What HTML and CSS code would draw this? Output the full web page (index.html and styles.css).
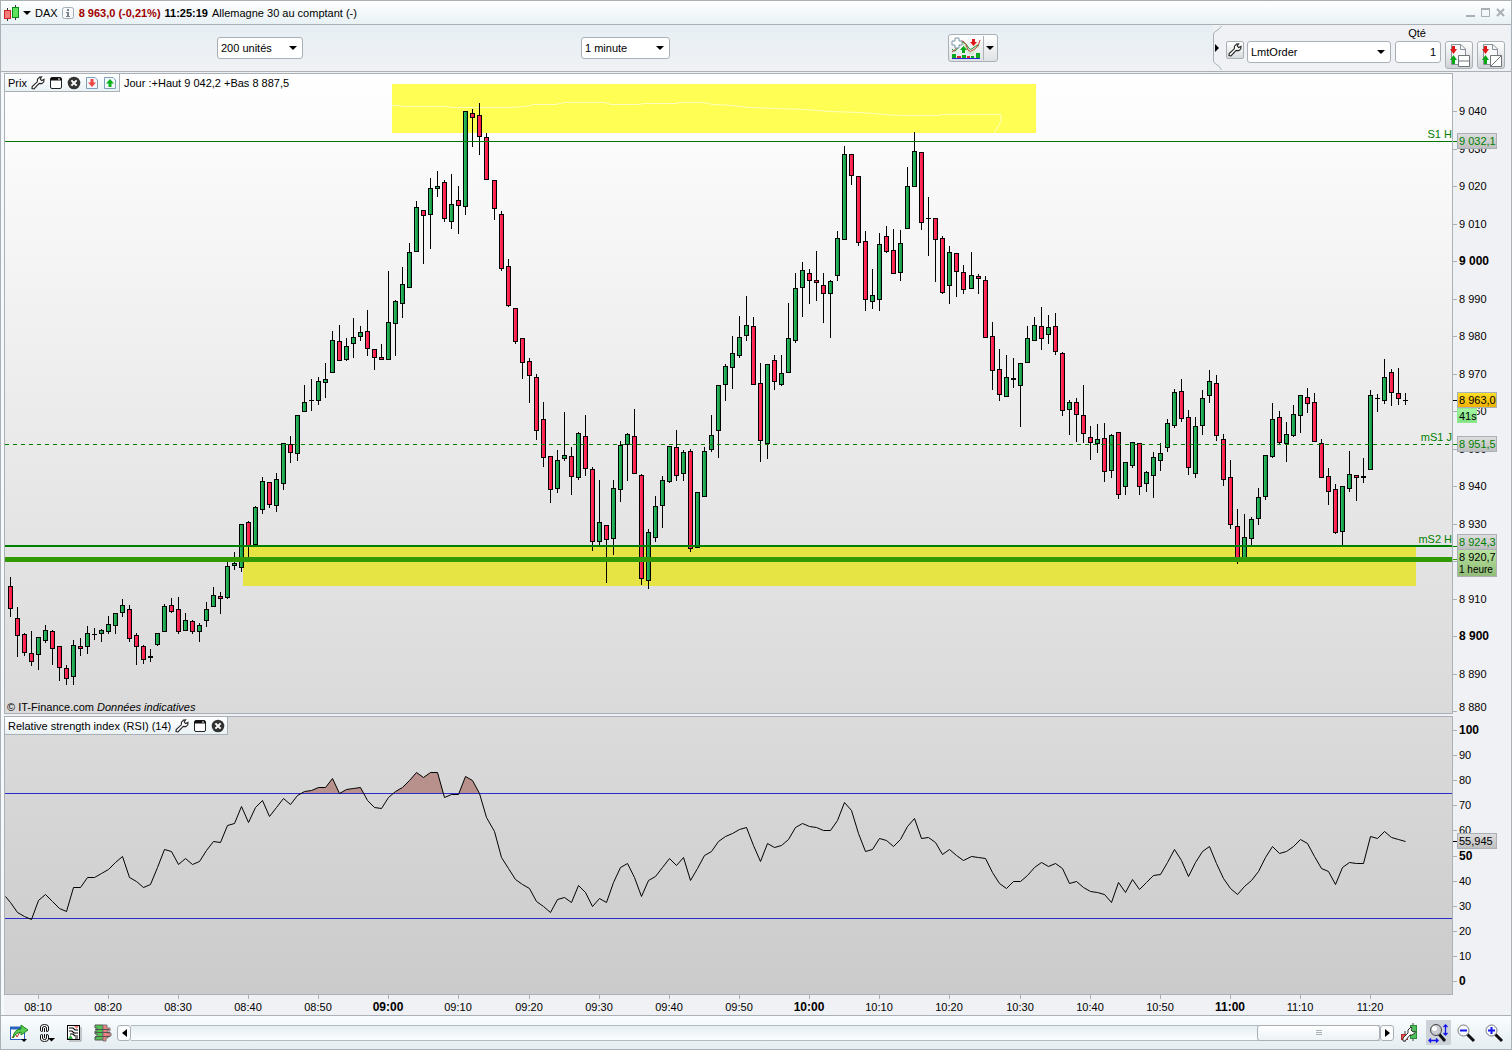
FILE: index.html
```
<!DOCTYPE html>
<html lang="fr">

<head>
    <meta charset="UTF-8">
    <meta name="viewport" content="width=device-width, initial-scale=1.0">
    <title>DAX - Allemagne 30 au comptant</title>
    <link rel="stylesheet" href="styles.css">
</head>

<body>
    <!-- Shared icons -->
    <svg class="sprite" aria-hidden="true">
        <symbol id="wrench" viewBox="0 0 14 14">
            <path d="M1 12.5 L1.2 10.6 L6.3 5.8 L6.5 3.2 L8.6 1 L10.6 0.8 L9.2 3 L10.6 4.6 L13 3.4 L12.8 5.8 L10.8 7.6 L8.2 7.4 L3 12.8 Z" fill="#fff" stroke="#222" stroke-width="1.1"/>
        </symbol>
        <symbol id="win" viewBox="0 0 14 14">
            <rect x="1.5" y="1.5" width="11" height="11" rx="1.5" fill="#fff" stroke="#222"/>
            <path d="M1.5 4.5 V3 Q1.5 1.5 3 1.5 H11 Q12.5 1.5 12.5 3 V4.5 Z" fill="#111"/>
            <path d="M9 3 H11" stroke="#fff"/>
        </symbol>
        <symbol id="close" viewBox="0 0 14 14">
            <circle cx="7" cy="7" r="6.3" fill="#333"/>
            <path d="M4.4 4.4 L9.6 9.6 M9.6 4.4 L4.4 9.6" stroke="#fff" stroke-width="2"/>
        </symbol>
        <symbol id="page-down" viewBox="0 0 14 14">
            <path d="M1.5 1.5 H10 L12.5 4 V12.5 H1.5 Z" fill="#f2f8fc" stroke="#7fa0b8"/>
            <path d="M5.5 3 H8.5 V6.5 H11 L7 11 L3 6.5 H5.5 Z" fill="#f04545"/>
        </symbol>
        <symbol id="page-up" viewBox="0 0 14 14">
            <path d="M1.5 1.5 H10 L12.5 4 V12.5 H1.5 Z" fill="#f2f8fc" stroke="#7fa0b8"/>
            <path d="M5.5 11 H8.5 V7.5 H11 L7 3 L3 7.5 H5.5 Z" fill="#0bb01a"/>
        </symbol>
        <symbol id="orders" viewBox="0 0 22 24">
            <path d="M3.5 1.5 H13 L17.5 6 V21.5 H3.5 Z" fill="#f6f8fa" stroke="#8a9096"/>
            <path d="M12.5 1.5 V6.5 H17.5" fill="none" stroke="#8a9096"/>
            <path d="M4 3 H7 V6 H9 L5.500 11 L2 6 H4 Z" fill="#e01818"/>
            <path d="M4 21 H7 V17 H9 L5.500 12 L2 17 H4 Z" fill="#08a818"/>
        </symbol>
    </svg>

    <header class="titlebar">
        <svg class="logo" width="16" height="16" viewBox="0 0 16 16">
            <path d="M3.500 3 V16 M11.500 0 V15" stroke="#333"/>
            <rect x="0.500" y="5.500" width="6" height="8" fill="#f27c7c" stroke="#c22"/>
            <rect x="8.500" y="2.500" width="6" height="10" fill="#5fe05f" stroke="#0a8a1a"/>
        </svg>
        <span class="caret"></span>
        <span class="symbol">DAX</span>
        <svg class="info" width="12" height="12" viewBox="0 0 12 12">
            <rect x="0.500" y="0.500" width="11" height="11" rx="2" fill="#f6f8fa" stroke="#a4acb2"/>
            <path d="M5 2 H7 V4 H5 Z M4 5 H7 V9 H8 V10 H4 V9 H5 V6 H4 Z" fill="#7c848a"/>
        </svg>
        <strong class="quote">8 963,0 (-0,21%)</strong>
        <strong class="clock">11:25:19</strong>
        <span>Allemagne 30 au comptant (-)</span>
        <div class="window-buttons">
            <button type="button" aria-label="Réduire"><svg width="9" height="9"><path d="M0 8 H9" stroke="#a9b0b5" stroke-width="2"/></svg></button>
            <button type="button" aria-label="Agrandir"><svg width="9" height="9"><path d="M0.500 1 V8.500 H8.500 V1" fill="none" stroke="#a9b0b5"/><path d="M0 1 H9" stroke="#a9b0b5" stroke-width="2"/></svg></button>
            <button type="button" aria-label="Fermer"><svg width="9" height="9"><path d="M1 1 L8 8 M8 1 L1 8" stroke="#a9b0b5" stroke-width="2"/></svg></button>
        </div>
    </header>

    <section class="toolbar">
        <div class="cell units">
            <span class="select"><select aria-label="Unités"><option>200 unités</option></select></span>
        </div>
        <div class="cell period">
            <span class="select"><select aria-label="Période"><option>1 minute</option></select></span>
        </div>
        <div class="cell indicators">
            <button type="button" class="split" aria-label="Indicateurs">
                <svg width="32" height="24" viewBox="0 0 32 24">
                    <path d="M2 17 Q5 16 7 11 T13 6 L20 16 Q22 18 24 13 T30 5 L29 12 Q27 10 25 15 T19 18 L12 8 Q8 8 2 17" fill="#cdeac4"/>
                    <path d="M2 13 Q5 18 8 11 Q10 7 13 6 Q16 7 18 11 Q20 15 23 12 Q25 10 29 9" fill="none" stroke="#149020"/>
                    <path d="M2 16 Q6 14 8 9 T13 5 Q16 7 18 14 Q20 17 23 14 Q28 12 30 4" fill="none" stroke="#c84040"/>
                    <path d="M5 2 H9 V5 H12 V9 H9 V12 H5 V9 H2 V5 H5 Z" fill="#fff" stroke="#7c98a8"/>
                    <path d="M22 3 H25 V6 H27 L23.500 10 L20 6 H22 Z" fill="#e01818"/>
                    <path d="M12 17 H15 V14 H17 L13.500 10 L10 14 H12 Z" fill="#08a818"/>
                    <path d="M2 18 H6 V22 H2 Z M12 19 H16 V22 H12 Z M21 20 H24 V22 H21 Z M26 17 H30 V22 H26 Z" fill="#0aa81c"/>
                    <path d="M7 20 H11 V22 H7 Z M17 20 H20 V22 H17 Z" fill="#d03030"/>
                    <path d="M2 22.500 H30" stroke="#2028d8"/>
                </svg>
                <span class="split-arrow"><span class="caret"></span></span>
            </button>
        </div>
        <form class="order">
            <svg class="bracket" width="9" height="46" viewBox="0 0 9 46">
                <path d="M8.500 1 Q7 4 1.500 7 Q0.500 8 0.500 10 V35 Q0.500 37 1.500 38 Q7 41 8.500 45" fill="none" stroke="#a9b0b6"/>
                <path d="M2 19 L6 23 L2 27 Z" fill="#000"/>
            </svg>
            <button type="button" class="tool" aria-label="Réglages"><svg width="14" height="14"><use href="#wrench"/></svg></button>
            <span class="select"><select aria-label="Type d'ordre"><option>LmtOrder</option></select></span>
            <div class="qty">
                <label for="qty">Qté</label>
                <input id="qty" type="text" value="1">
            </div>
            <button type="button" class="big" aria-label="Ordres liés">
                <svg width="22" height="24"><use href="#orders"/><path d="M10.500 12.500 H21.500 V23.500 H10.500 Z M10.500 18 H21.500" fill="#fff" stroke="#70767c"/></svg>
            </button>
            <button type="button" class="big" aria-label="Ordres obliques">
                <svg width="22" height="24"><use href="#orders"/><path d="M10.500 12.500 H21.500 V23.500 H10.500 Z" fill="#fff" stroke="#70767c"/><path d="M10.500 23.500 L21.500 12.500" stroke="#70767c"/></svg>
            </button>
        </form>
    </section>

    <main class="charts">
        <div class="plot price">
            <svg id="price"></svg>
            <div class="panel-head">
                <span>Prix</span>
                <button type="button" aria-label="Réglages"><svg width="14" height="14"><use href="#wrench"/></svg></button>
                <button type="button" aria-label="Agrandir"><svg width="14" height="14"><use href="#win"/></svg></button>
                <button type="button" aria-label="Fermer"><svg width="14" height="14"><use href="#close"/></svg></button>
                <button type="button" aria-label="Vers le bas"><svg width="14" height="14"><use href="#page-down"/></svg></button>
                <button type="button" aria-label="Vers le haut"><svg width="14" height="14"><use href="#page-up"/></svg></button>
            </div>
            <p class="day-range">Jour :+Haut 9 042,2 +Bas 8 887,5</p>
            <p class="credit">© IT-Finance.com <em>Données indicatives</em></p>
        </div>
        <div class="axis"><svg id="price-axis"></svg></div>

        <div class="plot rsi">
            <svg id="rsi"></svg>
            <div class="panel-head">
                <span>Relative strength index (RSI) (14)</span>
                <button type="button" aria-label="Réglages"><svg width="14" height="14"><use href="#wrench"/></svg></button>
                <button type="button" aria-label="Agrandir"><svg width="14" height="14"><use href="#win"/></svg></button>
                <button type="button" aria-label="Fermer"><svg width="14" height="14"><use href="#close"/></svg></button>
            </div>
        </div>
        <div class="axis"><svg id="rsi-axis"></svg></div>

        <div class="time"><svg id="time-axis"></svg></div>
    </main>

    <footer class="bottombar">
        <button type="button" class="icon" aria-label="Exporter">
            <svg width="20" height="20" viewBox="0 0 20 20">
                <rect x="1.500" y="4.500" width="14" height="12" fill="#fff" stroke="#2a62c0"/>
                <path d="M1 5 H12" stroke="#2a62c0" stroke-width="3"/>
                <path d="M3 15 L6 10 L8 14 L11 9" fill="none" stroke="#d03030"/>
                <path d="M4 15 Q5 6 12 6 V2 L19 7 L12 12 V9 Q7 9 4 15 Z" fill="#5ccf52" stroke="#1a8a1a"/>
                <path d="M12 16 H18 L15 19 Z" fill="#000"/>
            </svg>
        </button>
        <button type="button" class="icon" aria-label="Lier">
            <svg width="20" height="20" viewBox="0 0 20 20">
                <path d="M5 8.500 H4.500 Q3.500 8.500 3.500 7 V4 Q3.500 1.500 7.500 1.500 Q11.500 1.500 11.500 4 V7 Q11.500 8.500 10 8.500 H9.500 V5 Q9.500 3.500 7.500 3.500 Q5.500 3.500 5.500 5 V8.500 M7.500 5 V9" fill="#fff" stroke="#111"/>
                <path d="M5 11.500 H4.500 Q3.500 11.500 3.500 13 V16 Q3.500 18.500 7.500 18.500 Q11.500 18.500 11.500 16 V13 Q11.500 11.500 10 11.500 H9.500 V15 Q9.500 16.500 7.500 16.500 Q5.500 16.500 5.500 15 V11.500 M7.500 11 V15" fill="#fff" stroke="#111"/>
                <path d="M11 15 H18 L14.500 18.500 Z" fill="#000"/>
            </svg>
        </button>
        <button type="button" class="icon" aria-label="Liste">
            <svg width="20" height="20" viewBox="0 0 20 20">
                <path d="M16 4 V18 H4" fill="none" stroke="#999"/>
                <rect x="2.500" y="2.500" width="12" height="14" fill="#fff" stroke="#000"/>
                <path d="M9 3 H14 L11.500 6 Z" fill="#f08080"/><path d="M3 16 L5.500 12 L8 16 Z" fill="#30b040"/>
                <path d="M4 5 H8 L10 7 H13 M4 8 H7 L9 10 H13 M5 11 H8 L10 13 H13 M10 15 H13" fill="none" stroke="#000" stroke-width="1.200"/>
            </svg>
        </button>
        <button type="button" class="icon" aria-label="Carnet">
            <svg width="20" height="20" viewBox="0 0 20 20">
                <path d="M2 2 H10 V17 H2 V14 H4 V11 H2 V8 H4 V5 H2 Z" fill="#52c452" stroke="#555"/>
                <path d="M10 2 H14 V5 H17 V8 H14 V10 H18 V13 H15 V15 H13 V18 H10 Z" fill="#f08080" stroke="#777"/>
                <path d="M2 6.500 H16 M2 9.500 H17 M2 13.500 H17" stroke="#555"/>
            </svg>
        </button>
        <div class="scroll">
            <button type="button" class="step" aria-label="Gauche"><svg width="5" height="8"><path d="M5 0 L0 4 L5 8 Z"/></svg></button>
            <div class="track">
                <div class="thumb"><svg width="6" height="6"><path d="M0 0.500 H6 M0 2.500 H6 M0 4.500 H6" stroke="#a9b0b5"/></svg></div>
            </div>
            <button type="button" class="step" aria-label="Droite"><svg width="5" height="8"><path d="M0 0 L5 4 L0 8 Z"/></svg></button>
        </div>
        <div class="zoom">
            <button type="button" aria-label="Style du graphique">
                <svg width="20" height="20" viewBox="0 0 20 20">
                    <path d="M5 8 V19 M13 0 V18" stroke="#444"/>
                    <rect x="1.500" y="11.500" width="6" height="5" fill="#f05050" stroke="#b03030"/>
                    <rect x="10.500" y="2.500" width="6" height="13" fill="#4fc05a" stroke="#2a8a38"/>
                    <path d="M3 18 L3 15 L8 10 L8 7 L11 4 L12 5 L11 7 L13 9 L15 8 L15 10 L12 12 L10 12 L5 18 Z" fill="#fff" stroke="#333"/>
                </svg>
            </button>
            <button type="button" class="active" aria-label="Zoom automatique">
                <svg width="20" height="20" viewBox="0 0 20 20">
                    <path d="M11 11 L17 18" stroke="#111" stroke-width="3"/>
                    <circle cx="8" cy="7" r="5.500" fill="#c8ccd0" stroke="#444"/><circle cx="6.500" cy="5.500" r="2.500" fill="#fff"/>
                    <path d="M17.500 2 V12 M15.500 4 L17.500 2 L19.500 4 M15.500 10 L17.500 12 L19.500 10 M1 17.500 H10 M3 15.500 L1 17.500 L3 19.500 M8 15.500 L10 17.500 L8 19.500" fill="none" stroke="#1414f0" stroke-width="1.300"/>
                </svg>
            </button>
            <button type="button" aria-label="Zoom arrière">
                <svg width="20" height="20" viewBox="0 0 20 20">
                    <path d="M11 11 L18 18" stroke="#111" stroke-width="3"/>
                    <circle cx="7.500" cy="7.500" r="5.500" fill="#f6fafd" stroke="#777"/>
                    <path d="M4 7.500 H11" stroke="#1414f0" stroke-width="2"/>
                </svg>
            </button>
            <button type="button" aria-label="Zoom avant">
                <svg width="20" height="20" viewBox="0 0 20 20">
                    <path d="M11 11 L18 18" stroke="#111" stroke-width="3"/>
                    <circle cx="7.500" cy="7.500" r="5.500" fill="#f6fafd" stroke="#777"/>
                    <path d="M4 7.500 H11 M7.500 4 V11" stroke="#1414f0" stroke-width="2"/>
                </svg>
            </button>
        </div>
    </footer>

    <script src="chart.js"></script>
</body>

</html>
```
FILE: styles.css
```
* {
    margin: 0;
    padding: 0;
    box-sizing: border-box;
}

body {
    height: 100vh;
    min-height: 600px;
    display: flex;
    flex-direction: column;
    border: 1px solid #a9b0b6;
    background: #f0f1f5;
    color: #000;
    font-family: "Liberation Sans", Arial, sans-serif;
    font-size: 11px;
    line-height: 14px;
}

button,
input,
select {
    font: inherit;
    color: inherit;
}

button {
    border: none;
    background: none;
    cursor: pointer;
}

svg {
    display: block;
}

.sprite {
    position: absolute;
    width: 0;
    height: 0;
}

.caret {
    border: 4px solid transparent;
    border-top-color: #000;
    border-bottom: none;
}

/* Title bar */
.titlebar {
    height: 24px;
    flex: none;
    display: flex;
    align-items: center;
    padding: 0 6px 0 3px;
    border-bottom: 1px solid #a9b0b6;
    background: linear-gradient(#fff, #e8f1f5);
    white-space: nowrap;
}

.titlebar .caret {
    margin: 0 4px 0 3px;
}

.info {
    margin: 0 5px 0 4px;
}

.quote {
    color: #a00000;
    margin-right: 4px;
}

.clock {
    margin-right: 4px;
}

.window-buttons {
    display: flex;
    gap: 6px;
    margin-left: auto;
}

/* Toolbar */
.toolbar {
    height: 47px;
    flex: none;
    display: grid;
    grid-template-columns: 213fr 364fr 367fr 265fr 297px;
    padding: 0 1px 0 3px;
    border-bottom: 1px solid #a9b0b6;
    background: linear-gradient(#e6eff4, #f0f1f4);
}

.cell {
    display: flex;
    align-items: center;
}

.units {
    grid-column: 2;
}

.units .select {
    width: 86px;
}

.period .select {
    width: 89px;
}

.select {
    position: relative;
    display: block;
    height: 22px;
}

.select::after {
    content: "";
    position: absolute;
    right: 6px;
    top: 9px;
    border: 4px solid transparent;
    border-top-color: #000;
    border-bottom: none;
    pointer-events: none;
}

.select select {
    appearance: none;
    width: 100%;
    height: 22px;
    padding: 0 3px;
    border: 1px solid #a9b0b6;
    border-radius: 3px;
    background: #fff;
}

.split {
    display: flex;
    height: 28px;
    padding: 1px;
    border: 1px solid #a9b0b6;
    border-radius: 3px;
    background: linear-gradient(#fff, #dfe2e5);
}

.split-arrow {
    display: flex;
    align-items: center;
    margin-left: 1px;
    padding: 0 2px;
    border-left: 1px solid #a9b0b6;
}

.order {
    grid-column: 5;
    display: flex;
    align-items: flex-start;
    background: #f0f1f5;
}

.order .select {
    width: 144px;
    margin: 16px 4px 0 3px;
}

.tool {
    width: 18px;
    height: 18px;
    margin: 16px 0 0 4px;
    padding: 1px;
    border: 1px solid #a9b0b6;
    border-radius: 2px;
    background: linear-gradient(#fff, #d8dbde);
}

.qty {
    width: 46px;
    display: flex;
    flex-direction: column;
    gap: 1px;
    padding-top: 1px;
    text-align: center;
}

.qty label {
    padding-right: 2px;
}

.qty input {
    width: 100%;
    height: 22px;
    padding: 0 4px;
    border: 1px solid #a9b0b6;
    border-radius: 3px;
    text-align: right;
}

.big {
    width: 28px;
    height: 28px;
    margin: 16px 0 0 4px;
    padding: 1px 2px;
    border: 1px solid #a9b0b6;
    border-radius: 3px;
    background: linear-gradient(#fff, #d0d3d6);
}

/* Charts */
.charts {
    flex: 1;
    min-height: 0;
    display: grid;
    grid-template-columns: minmax(0, 1fr) 55px;
    grid-template-rows: minmax(0, 641fr) minmax(0, 281fr) 20px;
    margin-top: 1px;
    padding: 0 3px;
    border-bottom: 1px solid #a9b0b6;
    background: linear-gradient(90deg, #f6f9fb 3px, #f0f1f5 3px);
}

.charts svg[id] {
    width: 100%;
    height: 100%;
    overflow: visible;
}

.plot {
    position: relative;
    overflow: hidden;
    border: 1px solid #a9b0b6;
}

.price {
    background: linear-gradient(#fff, #dadada);
}

.rsi {
    margin-top: 2px;
    background: linear-gradient(#dbdbdb, #cbcbcb);
}

.rsi + .axis {
    margin-top: 2px;
}

.axis {
    padding: 1px 0;
}

.time {
    padding-left: 1px;
    padding-right: 1px;
}

.panel-head {
    position: absolute;
    top: 0;
    left: 0;
    height: 18px;
    display: flex;
    align-items: center;
    gap: 4px;
    padding: 0 2px 0 3px;
    border-right: 1px solid #a9b0b6;
    border-bottom: 1px solid #a9b0b6;
    background: linear-gradient(#fff, #eaf2f6);
}

.day-range {
    position: absolute;
    top: 2px;
    left: 119px;
}

.credit {
    position: absolute;
    bottom: -1px;
    left: 2px;
}

.label {
    fill: #000;
}

.strong {
    font-size: 12px;
    font-weight: bold;
}

.level {
    fill: #008000;
}

/* Bottom bar */
.bottombar {
    height: 33px;
    flex: none;
    display: flex;
    align-items: center;
    padding: 0 4px 0 8px;
    background: linear-gradient(#fafdff, #e4edf1);
}

.icon {
    width: 20px;
    margin-right: 8px;
}

.scroll {
    flex: 1;
    display: flex;
    margin: 0 4px 0 -4px;
    height: 16px;
}

.step {
    width: 14px;
    display: flex;
    align-items: center;
    justify-content: center;
    border: 1px solid #a9b0b6;
    border-radius: 3px;
    background: #fafcfd;
}

.track {
    flex: 1;
    display: flex;
    justify-content: flex-end;
    border-top: 1px solid #b4bbc0;
    border-bottom: 1px solid #b4bbc0;
    background: linear-gradient(#e6eef2, #fbfdfe);
}

.thumb {
    width: 123px;
    display: flex;
    align-items: center;
    justify-content: center;
    border: 1px solid #a9b0b6;
    border-radius: 3px;
    margin: -1px 0;
    background: linear-gradient(#fff, #ecf2f5);
}

.zoom {
    display: flex;
    gap: 3px;
}

.zoom button {
    width: 25px;
    height: 25px;
    padding: 2px;
}

.zoom .active {
    background: #ccd2d8;
}
```
FILE: chart.js
```
const NS = 'http://www.w3.org/2000/svg';
const W = 1447, PRICE_H = 639, RSI_H = 277;

// one candle a minute from 08:06: high, top, bottom, low, colour (g up, r down)
const candles = `
577 586 609 617 r,607 618 636 657 r,633 634 653 656 r,631 653 662 666 r,637 637 655 670 g,625 630 641 643 g,630 631 649 665 r,646 646 668 681 r,665 668 679 685 r,640 645 677 685 g,
638 646 649 656 r,626 633 647 654 g,628 634 635 640 g,629 630 634 642 g,616 624 632 634 g,613 613 626 634 g,599 605 613 617 g,605 609 639 642 r,633 635 647 665 r,645 646 660 664 r,
649 656 658 662 g,633 633 645 646 g,604 606 632 632 g,598 605 612 613 r,597 609 632 634 r,613 620 631 631 g,620 621 632 634 r,623 625 632 642 g,602 609 621 627 g,587 595 607 607 g,
592 596 599 614 r,562 566 598 599 g,552 563 566 570 g,524 524 568 572 g,521 522 546 558 r,506 507 545 545 g,477 481 510 514 g,482 482 505 508 r,473 479 506 512 g,443 443 484 490 g,
436 444 453 463 r,415 415 454 461 g,385 402 412 412 g,379 400 401 411 g,377 381 401 405 g,363 379 383 398 g,331 340 373 373 g,325 341 361 361 r,338 346 360 361 g,318 337 344 358 g,
326 332 337 341 g,310 331 349 356 r,349 349 358 370 r,344 357 360 360 r,271 322 360 360 g,300 301 324 356 g,267 284 304 318 g,243 252 288 288 g,201 207 252 252 g,210 210 216 264 r,
178 188 215 249 g,171 186 189 197 g,180 182 219 222 r,174 204 222 229 g,186 200 206 234 r,111 111 207 215 g,109 113 118 147 r,103 115 137 155 r,133 137 180 180 r,180 180 209 220 r,
211 214 269 271 r,259 266 306 307 r,308 308 342 344 r,338 338 363 379 r,358 361 376 403 r,374 377 431 440 r,402 419 458 467 r,456 456 490 503 r,450 460 489 493 g,412 455 459 461 g,
447 456 477 495 r,432 433 478 480 g,415 436 469 476 r,467 469 542 551 r,480 522 542 545 g,525 525 540 583 r,480 488 539 555 g,441 445 490 502 g,433 434 445 481 g,409 436 474 474 r,
474 475 579 585 r,529 532 581 589 g,496 506 538 542 g,476 480 506 528 g,446 446 482 483 g,430 447 476 481 r,450 452 474 481 g,449 451 549 552 r,492 492 548 548 g,447 451 497 497 g,
415 435 450 452 g,385 385 431 458 g,364 366 385 401 g,336 353 368 389 g,316 337 356 358 g,296 325 336 341 g,317 326 385 385 r,363 383 441 462 r,364 364 444 459 g,355 360 382 390 r,
355 373 385 386 g,303 338 373 373 g,273 288 341 343 g,262 270 288 317 g,269 273 281 304 r,251 280 283 301 r,273 285 294 323 r,280 281 294 338 g,231 238 276 281 g,146 154 240 240 g,
154 154 176 185 r,176 176 243 246 r,231 241 300 311 r,269 295 302 309 g,233 244 300 311 g,226 236 252 253 r,229 250 274 274 r,230 243 273 281 g,167 186 229 229 g,132 151 187 187 g,
152 152 223 230 r,197 218 219 256 g,218 218 240 282 r,236 238 293 294 r,246 252 286 304 g,253 253 272 297 r,265 272 290 294 r,252 275 289 289 g,274 276 279 294 r,276 280 338 338 r,
322 336 371 390 r,349 369 395 401 r,355 377 397 397 g,358 378 380 388 g,363 363 386 427 g,326 338 363 363 g,317 325 341 341 g,307 326 339 350 r,315 327 335 344 g,313 326 352 355 r,
352 353 411 416 r,400 402 410 435 g,398 402 415 442 r,385 415 434 443 r,426 437 443 460 r,424 439 444 453 g,423 438 472 482 r,434 435 471 478 g,432 432 495 499 r,462 462 487 495 g,
442 442 466 468 g,443 443 487 495 r,471 472 484 492 g,452 457 476 498 g,443 453 461 471 g,419 423 448 452 g,389 392 426 428 g,379 391 419 422 r,410 417 468 475 r,417 426 474 478 g,
390 398 426 435 g,370 381 396 403 g,375 383 436 441 r,434 439 480 486 r,460 477 525 529 r,509 526 558 564 r,514 537 558 558 g,517 519 539 545 g,488 497 519 525 g,455 455 497 500 g,
403 419 457 458 g,411 417 443 445 r,422 434 444 462 g,405 414 436 437 g,395 395 416 433 g,388 397 404 413 r,393 402 442 442 r,439 443 478 478 r,468 476 492 505 r,484 489 533 534 r,
486 486 532 545 g,451 474 489 492 g,475 475 478 501 r,458 476 478 483 g,390 395 470 470 g,394 398 399 412 g,359 377 401 404 g,369 372 393 406 r,368 393 399 405 r,393 400 401 405 g`
    .trim().split(/,\s*/).map(row => row.split(' '));

const rsi = [
    902, 912, 916, 919, 900, 894, 901, 908, 911, 887, 887, 877, 877, 873, 869, 862, 856, 877, 881, 887,
    884, 867, 849, 851, 864, 858, 864, 861, 850, 841, 842, 825, 823, 806, 822, 807, 800, 816, 807, 798,
    804, 795, 791, 790, 787, 787, 778, 793, 789, 788, 787, 800, 807, 808, 797, 791, 787, 780, 772, 777,
    772, 772, 797, 794, 794, 776, 780, 793, 817, 831, 857, 868, 879, 884, 888, 901, 906, 912, 899, 897,
    902, 885, 892, 906, 898, 902, 882, 867, 863, 877, 896, 880, 876, 867, 858, 865, 857, 880, 868, 855,
    851, 841, 836, 833, 829, 827, 845, 861, 843, 847, 845, 839, 827, 823, 826, 827, 830, 830, 820, 802,
    810, 833, 851, 849, 838, 840, 846, 839, 826, 818, 838, 837, 842, 854, 849, 855, 860, 856, 857, 858,
    872, 883, 888, 881, 881, 875, 867, 862, 866, 863, 868, 883, 881, 887, 891, 892, 894, 902, 882, 892,
    879, 889, 882, 875, 874, 862, 849, 860, 876, 862, 851, 846, 863, 878, 888, 894, 886, 880, 871, 857,
    846, 853, 851, 846, 839, 843, 856, 868, 871, 884, 867, 862, 863, 863, 836, 838, 831, 837, 839, 841
];

function el(parent, name, attrs, text) {
    const node = document.createElementNS(NS, name);
    for (const key in attrs) node.setAttribute(key, attrs[key]);
    if (text) node.textContent = text;
    parent.appendChild(node);
    return node;
}

function rect(svg, x, y, width, height, fill) {
    return el(svg, 'rect', { x, y, width, height, fill, 'shape-rendering': 'crispEdges' });
}

function clear(id) {
    const svg = document.getElementById(id);
    svg.innerHTML = `<defs>
        <linearGradient id="${id}-up"><stop offset="0" stop-color="#2fc468"/><stop offset="1" stop-color="#109038"/></linearGradient>
        <linearGradient id="${id}-down"><stop offset="0" stop-color="#ff3c66"/><stop offset="1" stop-color="#ff0f3c"/></linearGradient>
        <linearGradient id="${id}-grey" x2="0" y2="1"><stop offset="0" stop-color="#dedede"/><stop offset="1" stop-color="#bebebe"/></linearGradient>
        <linearGradient id="${id}-gold" x2="0" y2="1"><stop offset="0" stop-color="#ffe02a"/><stop offset="1" stop-color="#f0b000"/></linearGradient>
        <linearGradient id="${id}-mint" x2="0" y2="1"><stop offset="0" stop-color="#a4f8a4"/><stop offset="1" stop-color="#80e080"/></linearGradient>
        <linearGradient id="${id}-leaf" x2="0" y2="1"><stop offset="0" stop-color="#b8e4a0"/><stop offset="1" stop-color="#90bc78"/></linearGradient>
    </defs>`;
    return svg;
}

function size(id) {
    const box = document.getElementById(id).getBoundingClientRect();
    return [box.width, box.height];
}

const slot = i => Math.floor(5 + i * 7.0146);

function drawPrice() {
    const svg = clear('price');
    const [w, h] = size('price');
    const x = v => Math.round(v * w / W);
    const y = v => Math.round((v - 74) * h / PRICE_H);

    rect(svg, x(387), y(84), x(644), y(133) - y(84), '#fffe55');
    rect(svg, x(238), y(547), x(1173), y(586) - y(547), '#e6e344');
    const pen = [[366, 105], [395, 105], [397, 106], [442, 106], [447, 107], [505, 107], [520, 106], [530, 104], [550, 104], [560, 102], [600, 102], [606, 104], [633, 104], [640, 103], [670, 103], [676, 102], [698, 102], [708, 104], [727, 105], [745, 107], [800, 109], [825, 111], [855, 112], [880, 114], [896, 115], [935, 115], [936, 114], [996, 114], [996, 121], [988, 135]];
    el(svg, 'polyline', { points: pen.map(p => `${x(p[0])},${y(p[1]) + .5}`).join(' '), fill: 'none', stroke: '#fff', 'stroke-opacity': .6 });

    candles.forEach(([high, top, bottom, low, colour], i) => {
        const cx = x(slot(i));
        rect(svg, cx, y(high), 1, y(low) - y(high), '#000');
        rect(svg, cx - 2, y(top), 5, y(bottom) - y(top), '#000');
        if (bottom - top > 2) {
            rect(svg, cx - 1, y(top) + 1, 3, y(bottom) - y(top) - 2, `url(#price-${colour === 'g' ? 'up' : 'down'})`);
        }
    });

    // support and resistance levels
    rect(svg, 0, y(141), w, 1, '#007800');
    el(svg, 'path', { d: `M0 ${y(444) + .5} H${w}`, stroke: '#008000', 'stroke-dasharray': '4 4' });
    rect(svg, 0, y(545), w, 2, '#008000');
    rect(svg, 0, y(557), w, 5, '#339900');
    [['S1 H', 138], ['mS1 J', 441], ['mS2 H', 543]].forEach(([name, at]) => {
        el(svg, 'text', { x: w, y: y(at), 'text-anchor': 'end', class: 'level' }, name);
    });
}

function tag(svg, y, height, width, fill, lines, cls, stroke = '#a9b0b6') {
    el(svg, 'rect', { x: 4.5, y: y + .5, width: width - 1, height: height - 1, fill, stroke });
    lines.forEach((line, i) => el(svg, 'text', { x: 6, y: y + 12 + i * 12, class: cls, 'font-size': i ? 10 : 11 }, line));
}

function drawPriceAxis() {
    const svg = clear('price-axis');
    const h = size('price-axis')[1];
    const y = v => Math.floor((v - 74) * h / PRICE_H);
    for (let p = 9040; p >= 8880; p -= 10) {
        const at = Math.min(261.5 + (9000 - p) * 3.75, 707);
        rect(svg, 0, y(at === 707 ? 711 : at), 4, 1, '#a9b0b6');
        if (p === 8920) continue;
        const name = String(p).replace(/^(\d)/, '$1 ');
        el(svg, 'text', { x: 6, y: y(at) + 4, class: p % 100 ? 'label' : 'label strong' }, name);
    }
    [[141, '#008000'], [400, '#000'], [444, '#008000'], [546, '#008000'], [559, '#339900']].forEach(([at, c]) => rect(svg, 0, y(at), 4, 1, c));
    tag(svg, y(133), 16, 40, 'url(#price-axis-grey)', ['9 032,1'], 'level');
    tag(svg, y(408), 15, 20, 'url(#price-axis-mint)', ['41s'], 'label', '#90e890');
    tag(svg, y(392), 16, 40, 'url(#price-axis-gold)', ['8 963,0'], 'label');
    tag(svg, y(436), 16, 40, 'url(#price-axis-grey)', ['8 951,5'], 'level');
    tag(svg, y(549), 28, 40, 'url(#price-axis-leaf)', ['8 920,7', '1 heure'], 'label');
    tag(svg, y(534), 16, 40, 'url(#price-axis-grey)', ['8 924,3'], 'level');
}

function drawRsi() {
    const svg = clear('rsi');
    const [w, h] = size('rsi');
    const x = v => v * w / W;
    const y = v => (v - 717) * h / RSI_H;
    const points = [[0, 896]].concat(rsi.map((v, i) => [slot(i), v])).map(([a, b]) => `${x(a) + .5},${y(b) + .5}`).join(' ');
    const limit = Math.round(y(793));

    const clip = el(svg.querySelector('defs'), 'clipPath', { id: 'overbought' });
    el(clip, 'rect', { x: 0, y: 0, width: w, height: limit });
    el(svg, 'polygon', { points: `${points} ${x(1400)},${h} 0,${h}`, fill: '#b8908c', 'clip-path': 'url(#overbought)' });
    rect(svg, 0, limit, w, 1, '#2c2cc8');
    rect(svg, 0, Math.round(y(918)), w, 1, '#2c2cc8');
    el(svg, 'polyline', { points, fill: 'none', stroke: '#000' });
}

function drawRsiAxis() {
    const svg = clear('rsi-axis');
    const h = size('rsi-axis')[1];
    const y = v => Math.round((v - 717) * h / RSI_H);
    for (let v = 0; v <= 100; v += 10) {
        const at = y(981 - v * 2.51);
        rect(svg, 0, at, 4, 1, '#a9b0b6');
        el(svg, 'text', { x: 6, y: at + 4, class: v % 50 ? 'label' : 'label strong' }, String(v));
    }
    rect(svg, 0, y(841), 4, 1, '#000');
    tag(svg, y(833), 16, 40, 'url(#rsi-axis-grey)', ['55,945'], 'label');
}

function drawTimeAxis() {
    const svg = clear('time-axis');
    const w = size('time-axis')[0];
    for (let i = 4; i < candles.length; i += 10) {
        const minutes = 8 * 60 + 6 + i;
        const mm = minutes % 60;
        const at = Math.round(slot(i) * w / W);
        rect(svg, at, 0, 1, 4, '#a9b0b6');
        el(svg, 'text', { x: at, y: 16, 'text-anchor': 'middle', class: mm ? 'label' : 'label strong' },
            `${String(Math.floor(minutes / 60)).padStart(2, '0')}:${String(mm).padStart(2, '0')}`);
    }
}

function draw() {
    drawPrice();
    drawPriceAxis();
    drawRsi();
    drawRsiAxis();
    drawTimeAxis();
}

draw();
window.addEventListener('resize', draw);
```
